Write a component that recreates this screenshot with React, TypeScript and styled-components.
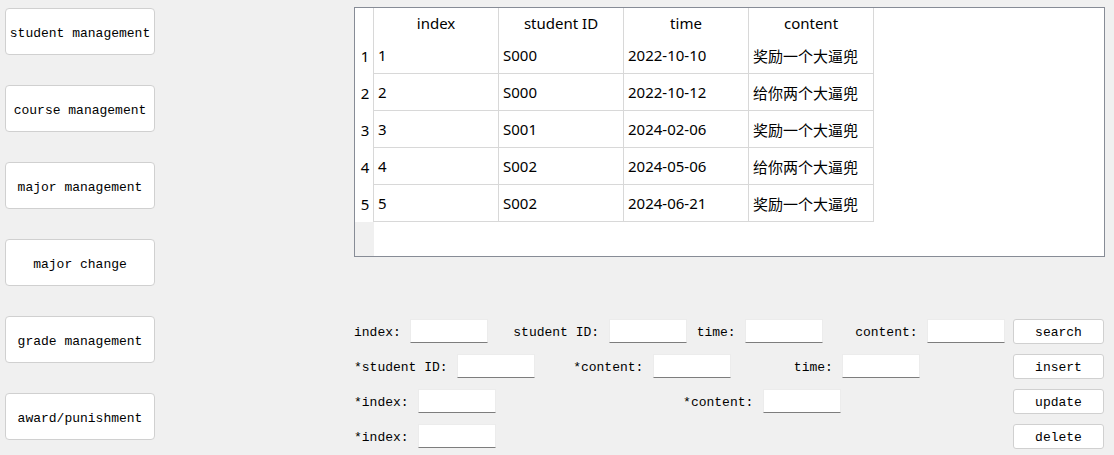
import React from "react";
import styled, { createGlobalStyle } from "styled-components";

interface Record {
    index: string
    studentId: string
    time: string
    content: string
}

const records: Record[] = [
    { index: "1", studentId: "S000", time: "2022-10-10", content: "奖励一个大逼兜" },
    { index: "2", studentId: "S000", time: "2022-10-12", content: "给你两个大逼兜" },
    { index: "3", studentId: "S001", time: "2024-02-06", content: "奖励一个大逼兜" },
    { index: "4", studentId: "S002", time: "2024-05-06", content: "给你两个大逼兜" },
    { index: "5", studentId: "S002", time: "2024-06-21", content: "奖励一个大逼兜" },
]

const columns = ["index", "student ID", "time", "content"]

const navItems = [
    "student management",
    "course management",
    "major management",
    "major change",
    "grade management",
    "award/punishment",
]

const App = () => {
    return (
        <>
        <GlobalStyle />
        <Page>
            <Nav>
                {navItems.map(item => (
                    <NavButton key={item}>{item}</NavButton>
                ))}
            </Nav>
            <Main>
                <TableFrame>
                    <Grid>
                        <Corner />
                        {columns.map(col => (
                            <HeaderCell key={col}>{col}</HeaderCell>
                        ))}
                        {records.map((r, i) => (
                            <React.Fragment key={r.index}>
                                <RowHeader>{i + 1}</RowHeader>
                                <Cell>{r.index}</Cell>
                                <Cell>{r.studentId}</Cell>
                                <Cell>{r.time}</Cell>
                                <Cell>{r.content}</Cell>
                            </React.Fragment>
                        ))}
                        <Gutter />
                    </Grid>
                </TableFrame>

                <Form>
                    <FormRow>
                        <Label $gap={0}>index:</Label>
                        <Input />
                        <Label $gap={25}>student ID:</Label>
                        <Input />
                        <Label $gap={10}>time:</Label>
                        <Input />
                        <Label $gap={32}>content:</Label>
                        <Input />
                        <ActionButton>search</ActionButton>
                    </FormRow>
                    <FormRow>
                        <Label $gap={0}>*student ID:</Label>
                        <Input />
                        <Label $gap={38}>*content:</Label>
                        <Input />
                        <Label $gap={63}>time:</Label>
                        <Input />
                        <ActionButton>insert</ActionButton>
                    </FormRow>
                    <FormRow>
                        <Label $gap={0}>*index:</Label>
                        <Input />
                        <Label $gap={187}>*content:</Label>
                        <Input />
                        <ActionButton>update</ActionButton>
                    </FormRow>
                    <FormRow>
                        <Label $gap={0}>*index:</Label>
                        <Input />
                        <ActionButton>delete</ActionButton>
                    </FormRow>
                </Form>
            </Main>
        </Page>
        </>
    )
}

const GlobalStyle = createGlobalStyle`
    html, body {
        margin: 0;
        padding: 0;
        background-color: #f0f0f0;
    }
    body {
        font-family: "Liberation Mono", monospace;
    }
`

const Page = styled.div`
    display: flex;
    flex-direction: row;
    align-items: flex-start;
    width: 1114px;
    height: 455px;
    overflow: hidden;
`

const Nav = styled.nav`
    display: flex;
    flex-direction: column;
    gap: 30px;
    padding: 8px 0 0 5px;
`

const NavButton = styled.button`
    width: 150px;
    height: 47px;
    padding: 4px 0 0;
    background-color: #fff;
    border: 1px solid #d0d0d0;
    border-radius: 4px;
    font: 13px "Liberation Mono", monospace;
    color: #000;
    white-space: nowrap;
    overflow: hidden;
`

const Main = styled.main`
    display: flex;
    flex-direction: column;
    margin-left: 199px;
    padding-top: 7px;
    width: 751px;
`

const TableFrame = styled.div`
    box-sizing: border-box;
    width: 751px;
    height: 250px;
    border: 1px solid #878c96;
    background-color: #fff;
    overflow: hidden;
`

const Grid = styled.div`
    display: grid;
    grid-template-columns: 19px repeat(4, 125px);
    grid-template-rows: 29px repeat(5, 37px) 1fr;
    height: 100%;
    font: 15px "Noto Sans", "Noto Sans CJK SC", sans-serif;
    color: #000;
`

const Corner = styled.div`
    box-sizing: border-box;
    border-right: 1px solid #d8d8d8;
`

const HeaderCell = styled.div`
    box-sizing: border-box;
    display: flex;
    align-items: center;
    justify-content: center;
    border-right: 1px solid #d8d8d8;
    padding-top: 1px;
`

const RowHeader = styled.div`
    box-sizing: border-box;
    display: flex;
    align-items: center;
    justify-content: center;
    border-right: 1px solid #d8d8d8;
    padding: 0 0 0 2px;
`

const Cell = styled.div`
    box-sizing: border-box;
    display: flex;
    align-items: center;
    padding: 0 0 0 4px;
    border-right: 1px solid #d8d8d8;
    border-bottom: 1px solid #d8d8d8;
    white-space: nowrap;
`

const Gutter = styled.div`
    grid-column: 1;
    background-color: #f0f0f0;
`

const Form = styled.div`
    display: flex;
    flex-direction: column;
    gap: 9px;
    margin-top: 61px;
    width: 750px;
`

const FormRow = styled.div`
    display: flex;
    flex-direction: row;
    align-items: center;
    height: 26px;
`

const Label = styled.label<{ $gap: number }>`
    margin-left: ${props => props.$gap}px;
    margin-right: 9.5px;
    padding-top: 2px;
    font: 13px "Liberation Mono", monospace;
    color: #000;
    white-space: pre;
`

const Input = styled.input`
    box-sizing: border-box;
    width: 78px;
    height: 24px;
    margin: 0;
    padding: 0 3px;
    background-color: #fff;
    border: 1px solid #ececec;
    border-bottom-color: #7d7d7d;
    outline: none;
`

const ActionButton = styled.button`
    box-sizing: border-box;
    margin-left: auto;
    width: 91px;
    height: 25px;
    padding: 3px 0 0;
    background-color: #fff;
    border: 1px solid #d0d0d0;
    border-radius: 3px;
    font: 13px "Liberation Mono", monospace;
    color: #000;
`

export default App
